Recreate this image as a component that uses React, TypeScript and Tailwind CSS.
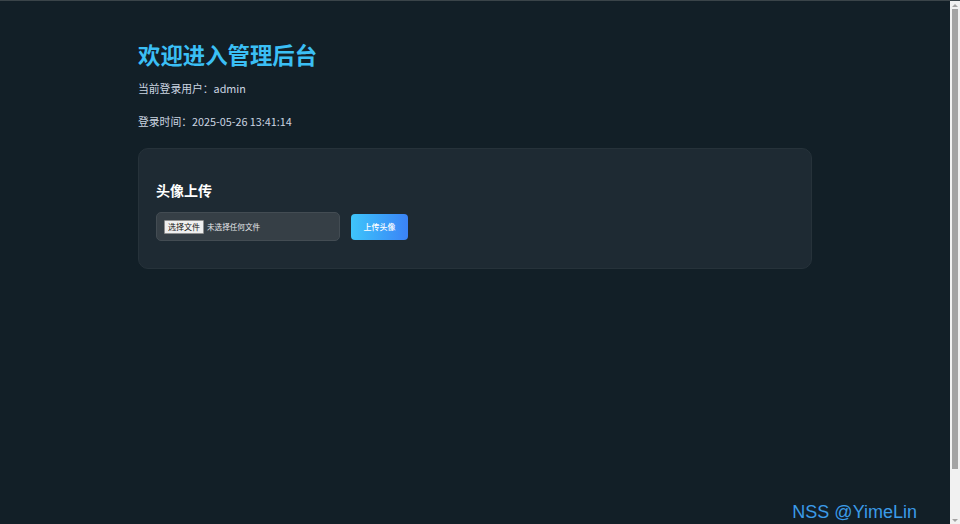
import { useState } from 'react'

const cjk = '"Noto Sans CJK SC", "Noto Sans", sans-serif'

function FilePicker() {
  const [fileName, setFileName] = useState<string | null>(null)

  return (
    <label className="flex items-center w-[184px] h-[29px] px-[7px] rounded-[5px] bg-[#363f46] border border-[#434c53] cursor-pointer">
      <input
        type="file"
        accept="image/*"
        className="hidden"
        onChange={(e) => setFileName(e.target.files?.[0]?.name ?? null)}
      />
      <span className="px-[3px] h-[14px] flex items-center bg-[#efefef] border border-[#8f8f8f] rounded-[1px] text-[8px] text-[#111]">
        选择文件
      </span>
      <span className="ml-[3px] text-[7.6px] text-[#e5e7eb]">{fileName ?? '未选择任何文件'}</span>
    </label>
  )
}

export default function App() {
  return (
    <div className="h-[524px] flex bg-[#121f27] border-t border-[#3a4449] overflow-hidden" style={{ fontFamily: cjk }}>
      <div className="relative flex-1">
        <div className="w-[674px] mx-auto pt-[37px]">
          <h1 className="text-[22.4px] leading-[32px] font-bold text-[#3bbff5]">欢迎进入管理后台</h1>
          <p className="mt-[10px] text-[10.8px] leading-[16px] text-[#cbd5e1]">当前登录用户：admin</p>
          <p className="mt-[17px] text-[10.8px] leading-[16px] text-[#cbd5e1]">登录时间：2025-05-26 13:41:14</p>

          <div className="mt-[19px] h-[121px] rounded-[10px] bg-[#1e2a33] border border-[#26323a] px-[17px] pt-[31px]">
            <h2 className="text-[14px] leading-[20px] font-bold text-white">头像上传</h2>
            <div className="mt-[12px] flex items-center gap-[11px]">
              <FilePicker />
              <button className="w-[57px] h-[26px] rounded-[4px] bg-gradient-to-r from-[#3fc5fa] to-[#3b82f6] text-[8px] font-medium text-white">
                上传头像
              </button>
            </div>
          </div>
        </div>

        <span
          className="absolute right-[33px] bottom-[1px] text-[18px] leading-[22px] text-[#3b9be8]"
          style={{ fontFamily: '"Liberation Sans", Arial, sans-serif' }}
        >
          NSS @YimeLin
        </span>
      </div>

      {/* page scrollbar */}
      <div className="w-[10px] bg-[#f1f1f1] flex flex-col items-center">
        <div className="h-[8px] flex items-center justify-center">
          <div className="w-0 h-0 border-l-[3px] border-r-[3px] border-b-[3px] border-l-transparent border-r-transparent border-b-[#a3a3a3]" />
        </div>
        <div className="w-[6px] h-[460px] bg-[#a3a3a3]" />
        <div className="flex-1" />
        <div className="h-[8px] flex items-center justify-center">
          <div className="w-0 h-0 border-l-[3px] border-r-[3px] border-t-[3px] border-l-transparent border-r-transparent border-t-[#a3a3a3]" />
        </div>
      </div>
    </div>
  )
}
